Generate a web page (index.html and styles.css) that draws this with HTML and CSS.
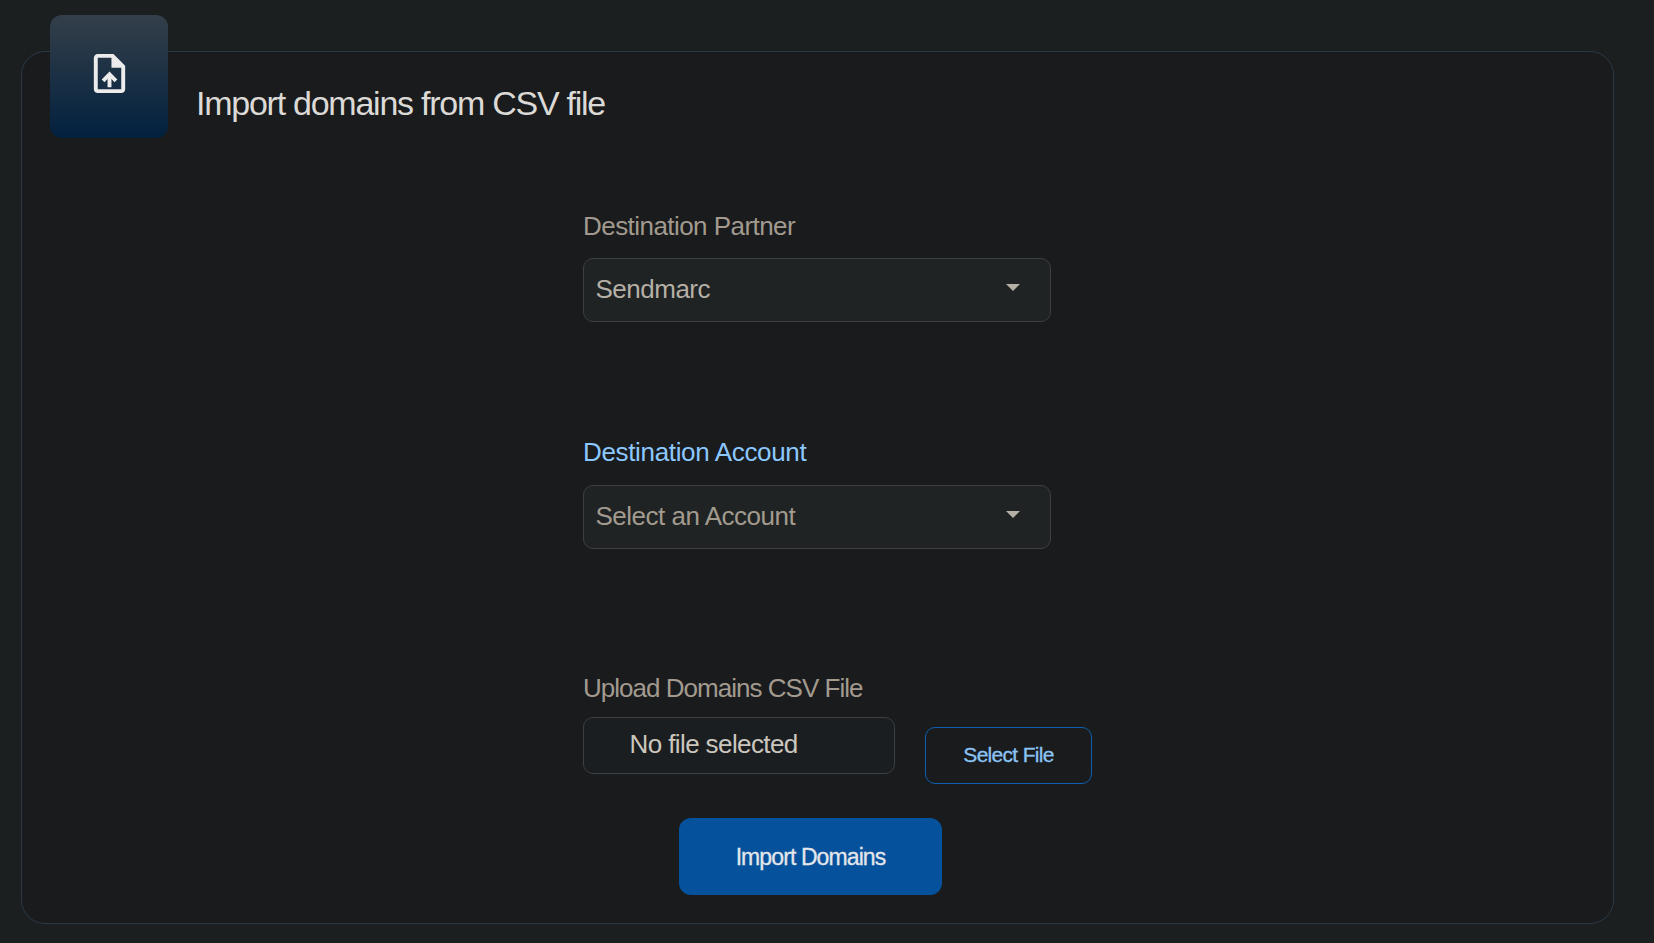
FILE: index.html
```html
<!DOCTYPE html>
<html lang="en">
<head>
<meta charset="utf-8">
<title>Import domains</title>
<link rel="stylesheet" href="styles.css">
</head>
<body>
<main class="card">
  <div class="tile">
    <svg class="tile-icon" viewBox="0 0 24 24" aria-hidden="true"><path d="M14 2H6c-1.1 0-2 .9-2 2v16c0 1.1.9 2 2 2h12c1.1 0 2-.9 2-2V8l-6-6zm4 18H6V4h7v5h5v11zM8 15.01l1.41 1.41L11 14.84V19h2v-4.16l1.59 1.59L16 15.01 12.01 11 8 15.01z"/></svg>
  </div>
  <h1 class="title">Import domains from CSV file</h1>
  <form class="form">
    <label class="label">Destination Partner</label>
    <div class="select">
      <span class="value">Sendmarc</span>
      <svg class="caret" viewBox="0 0 14 7" aria-hidden="true"><path d="M0 0h14L7 7z"/></svg>
    </div>
    <label class="label label-active gap-a">Destination Account</label>
    <div class="select">
      <span class="value placeholder">Select an Account</span>
      <svg class="caret" viewBox="0 0 14 7" aria-hidden="true"><path d="M0 0h14L7 7z"/></svg>
    </div>
    <label class="label gap-b tight">Upload Domains CSV File</label>
    <div class="file-row">
      <div class="file-box">No file selected</div>
      <button type="button" class="btn-outline">Select File</button>
    </div>
    <button type="button" class="btn-primary">Import Domains</button>
  </form>
</main>
</body>
</html>
```
FILE: styles.css
```css
* { box-sizing: border-box; }
html, body { margin: 0; height: 100%; }
body {
  background: #1b1f20;
  padding: 51px 40px 19px 21px;
  font-family: "Liberation Sans", Arial, sans-serif;
}
.card {
  position: relative;
  height: 873px;
  background: #191b1d;
  border: 1px solid #2b3947;
  border-radius: 24px;
  padding: 31px 0 0 174px;
}
.tile {
  position: absolute;
  left: 28px;
  top: -37px;
  width: 118px;
  height: 123px;
  border-radius: 12px;
  background: linear-gradient(180deg, #343f4a 0%, #02213f 100%);
  display: flex;
  justify-content: center;
  padding-top: 35px;
}
.tile-icon { width: 47px; height: 47px; fill: #ececec; }
.title {
  margin: 0;
  font-size: 34px;
  line-height: 40px;
  font-weight: 400;
  letter-spacing: -1.25px;
  color: #dcdad6;
}
.form {
  margin: 88px 0 0 387px;
  width: 509px;
}
.label {
  display: block;
  font-size: 26px;
  line-height: 30px;
  letter-spacing: -0.55px;
  color: #a29a8e;
  margin-bottom: 17px;
}
.label-active { color: #8cc8ff; margin-bottom: 18px; letter-spacing: -0.34px; }
.tight { margin-bottom: 14px; letter-spacing: -0.98px; }
.gap-a { margin-top: 115px; }
.gap-b { margin-top: 124px; }
.select {
  width: 468px;
  height: 64px;
  background: #1f2324;
  border: 1px solid #3c4042;
  border-radius: 10px;
  padding: 0 30px 2px 11.5px;
  display: flex;
  align-items: center;
  justify-content: space-between;
}
.value { font-size: 26px; letter-spacing: -0.5px; color: #b5afa6; }
.placeholder { color: #a29a8e; }
.caret { width: 14px; height: 7px; fill: #b5afa6; margin-bottom: 3px; }
.file-row { display: flex; align-items: flex-start; gap: 30px; }
.file-box {
  width: 312px;
  height: 57px;
  background: #1b1e20;
  border: 1px solid #3c4042;
  border-radius: 10px;
  padding: 0 0 2px 45.5px;
  display: flex;
  align-items: center;
  font-size: 26px;
  letter-spacing: -0.6px;
  color: #cbc7bf;
}
.btn-outline {
  margin-top: 10px;
  width: 167px;
  height: 57px;
  padding: 0 0 2px;
  background: transparent;
  border: 1px solid #0f5fb0;
  border-radius: 10px;
  font: 400 21px "Liberation Sans", Arial, sans-serif;
  letter-spacing: -0.7px;
  color: #8cc4f5;
  -webkit-text-stroke: 0.3px #8cc4f5;
}
.btn-primary {
  display: block;
  margin: 34px 0 0 96px;
  width: 263px;
  height: 77px;
  padding: 2px 0 0;
  background: #05519c;
  border: 0;
  border-radius: 12px;
  font: 400 23px "Liberation Sans", Arial, sans-serif;
  letter-spacing: -0.9px;
  color: #e3e6ea;
  -webkit-text-stroke: 0.3px #e3e6ea;
}
```
